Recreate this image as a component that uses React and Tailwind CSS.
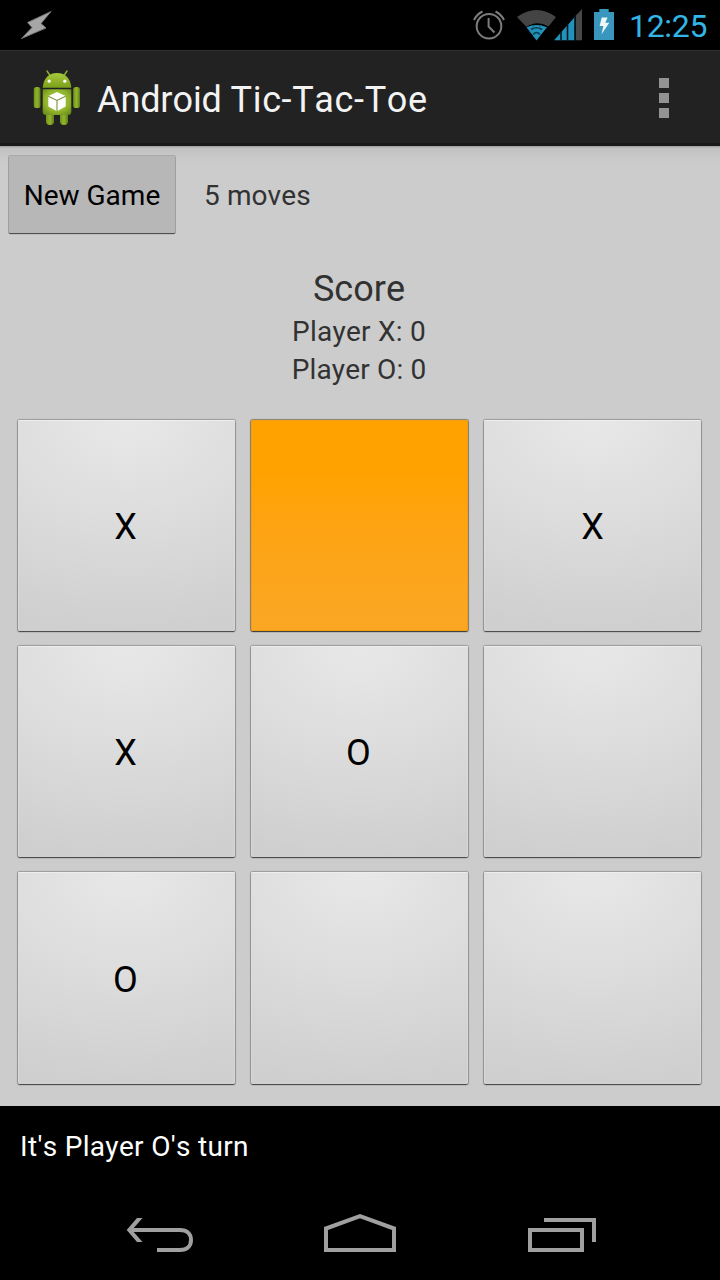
import React from "react";

function Bolt() {
  return (
    <svg className="block" width="60" height="50" viewBox="0 0 60 50">
      <path d="M51 11.5 L27.5 22.5 L32 27.5 L21.5 38.5 L46 28 L41 23.5 Z" fill="#a6a6a6" stroke="#777" strokeWidth="1" strokeLinejoin="round" />
    </svg>
  );
}

function StatusIcons() {
  return (
    <svg className="block" width="150" height="50" viewBox="470 0 150 50">
      <g fill="none" stroke="#7c7c7c" strokeWidth="2">
        <circle cx="489" cy="26.2" r="12.3" />
        <path d="M488.6 18 V26.5 L494.5 32.5" />
        <path d="M474 20 Q477 14 482.5 11.5 M504 20 Q501 14 495.5 11.5" />
      </g>
      <path d="M517 17 Q536.5 3 556 17 L548.5 26.5 Q536.5 20 526.5 27 Z" fill="#444" />
      <path d="M526.5 27.3 Q536.5 22.5 547 27.3 L536.5 40.5 Z" fill="#2491b8" />
      <path d="M531 29.5 Q536.5 26 542 29.5 M533 34.5 Q536.5 30.5 540 34.5" fill="none" stroke="#073f54" strokeWidth="1.7" />
      <path d="M532 24.8 L535 29 M541 24.8 L538 29" stroke="#176783" strokeWidth="1" />
      <path d="M554 40.3 L574.8 17 V40.3 Z" fill="#2491b8" />
      <path d="M575.8 15.5 L582 9 V40.3 H575.8 Z" fill="#484848" />
      <path d="M561 32 V40.3 M567.5 24 V40.3 M575 16 V40.3" stroke="#001824" strokeWidth="1.6" />
      <path d="M594 12 H599.3 V9 H608.7 V12 H614 V40 H594 Z" fill="#3997bd" />
      <path d="M601.7 17.5 H607.6 L605.3 22.7 H609.3 L601.5 34.2 L603.4 26 H599.6 Z" fill="#edf6f9" />
    </svg>
  );
}

function AndroidLogo() {
  return (
    <svg className="block" width="50" height="60" viewBox="32 68 50 60">
      <defs>
        <linearGradient id="droid" x1="0" x2="0" y1="0" y2="1">
          <stop offset="0" stopColor="#a6c93c" />
          <stop offset="1" stopColor="#7da01b" />
        </linearGradient>
        <linearGradient id="limb" x1="0" x2="1" y1="0" y2="0">
          <stop offset="0" stopColor="#71931b" />
          <stop offset=".5" stopColor="#91b52e" />
          <stop offset="1" stopColor="#5f8015" />
        </linearGradient>
        <radialGradient id="torso" cx=".5" cy=".45" r=".7">
          <stop offset="0" stopColor="#a8ca3d" />
          <stop offset=".6" stopColor="#91b52b" />
          <stop offset="1" stopColor="#65861a" />
        </radialGradient>
      </defs>
      <path d="M47 71 L50 75.5 M67 71 L64 75.5" stroke="#8cab2c" strokeWidth="1.5" strokeLinecap="round" />
      <path d="M42.7 87.8 C43.2 79 48.5 73 57 73 C65.5 73 70.8 79 71.3 87.8 Z" fill="url(#droid)" />
      <circle cx="49.2" cy="81.2" r="1.6" fill="#fff" />
      <circle cx="64.8" cy="81.2" r="1.6" fill="#fff" />
      <rect x="33.8" y="87" width="6.7" height="21" rx="2.6" fill="url(#limb)" />
      <rect x="73.2" y="87" width="6.7" height="21" rx="2.6" fill="url(#limb)" />
      <rect x="46" y="111" width="8" height="14" rx="3.7" fill="url(#limb)" />
      <rect x="60" y="111" width="8" height="14" rx="3.7" fill="url(#limb)" />
      <path d="M42.7 89.3 H71.3 V111.5 Q71.3 115 68 115 H46 Q42.7 115 42.7 111.5 Z" fill="url(#torso)" />
      <path d="M57 92 L65.7 96 V106.5 L57 111.2 L48.3 106.5 V96 Z" fill="#fff" />
      <path d="M48.3 96.3 L57 100.5 L65.7 96.3 M57 100.5 V111.2" fill="none" stroke="#789439" strokeWidth="1.1" />
    </svg>
  );
}

const cells = ["X", "", "X", "X", "O", "", "O", "", ""];

function Cell({ mark, highlighted }) {
  const surface = highlighted
    ? "bg-linear-to-b from-[#ffa200] from-25% to-[#fba724] shadow-[inset_0_0_0_1px_#f29e10,0_1px_1px_0_#3a3a3a,0_0_1px_1px_#8b8172]"
    : "bg-[radial-gradient(ellipse_130%_100%_at_50%_0%,#e8e8e8_0%,#dcdcdc_50%,#cfcfcf_100%)] shadow-[inset_0_1px_0_#eeeeee,inset_1px_0_0_#e0e0e088,inset_-1px_0_0_#e0e0e088,0_1px_1px_0_#444444,0_0_1px_1px_#999999]";
  return (
    <button className={`flex items-center justify-center rounded-[2px] pt-[2px] text-[36px] leading-none text-black nth-[3]:pl-[2px] nth-[7]:pt-[4px] ${surface}`}>
      <span className="-mr-[2px] pr-[4px]">{mark}</span>
    </button>
  );
}

export default function App() {
  return (
    <div className="flex h-[1280px] w-[720px] flex-col overflow-hidden bg-black font-['Roboto',sans-serif] [font-kerning:none]">
      <header className="flex h-[50px] shrink-0 items-center">
        <Bolt />
        <div className="ml-auto"><StatusIcons /></div>
        <time className="ml-[9px] w-[91px] pt-[2px] text-[32px] leading-[50px] tracking-[-0.3px] whitespace-nowrap text-[#33b5e5]">12:25</time>
      </header>
      <div className="flex h-24 shrink-0 items-center border-t border-b-[3px] border-t-[#303030] border-b-[#191919] bg-[#222] pt-[2px] pl-8">
        <AndroidLogo />
        <h1 className="ml-[15px] pt-[4px] text-[36px] leading-none tracking-[-0.1px] whitespace-nowrap text-[#f3f3f3]">
          Android <span className="tracking-[0.65px]">Tic-Tac-Toe</span>
        </h1>
        <button className="mr-[51px] ml-auto flex flex-col gap-[5px]">
          <span className="size-[10px] bg-[#939393]" />
          <span className="size-[10px] bg-[#939393]" />
          <span className="size-[10px] bg-[#939393]" />
        </button>
      </div>
      <main className="flex h-[960px] shrink-0 flex-col bg-[#ccc] bg-[linear-gradient(#999_0px,#c0c0c0_2px,#cacaca_12px,#ccc_24px)] text-[#323232]">
        <div className="flex h-[98px] items-start pt-[10px] pl-[9px]">
          <button className="h-[77px] w-[166px] rounded-[1px] bg-[#b7b7b7] pt-[2px] text-[28px] leading-none whitespace-nowrap text-black shadow-[0_1px_1px_0_#444444,0_0_0_1px_#aaaaaa]">New Game</button>
          <span className="ml-[29px] text-[28px] leading-[80px] tracking-[0.1px] whitespace-nowrap">5 moves</span>
        </div>
        <section className="flex h-[176px] flex-col items-center pt-[24px] pr-[2px]">
          <h2 className="text-[36px] leading-[42px] whitespace-nowrap">Score</h2>
          <p className="pt-[3px] text-[28px] leading-[38px] tracking-[0.25px] whitespace-nowrap">Player X: 0</p>
          <p className="text-[28px] leading-[38px] tracking-[0.15px] whitespace-nowrap">Player O: 0</p>
        </section>
        <section className="mr-[19px] ml-[18px] grid grid-cols-3 grid-rows-[211px_211px_212px] gap-x-[16px] gap-y-[15px]">
          {cells.map((mark, i) => <Cell key={i} mark={mark} highlighted={i === 1} />)}
        </section>
      </main>
      <p className="h-[78px] shrink-0 pl-5 text-[28px] leading-[82px] tracking-[0.32px] whitespace-nowrap text-white">It's Player O's turn</p>
      <nav className="flex h-24 shrink-0 items-center">
        <svg className="block" width="720" height="96" viewBox="0 1184 720 96">
          <g fill="none" stroke="#a0a0a0" strokeWidth="4">
            <path d="M130 1230 H180 C187 1230 191 1234 191 1240 C191 1246 187 1250 180 1250 H157" />
            <path d="M326 1250 V1228.5 L360 1216.2 L394 1228.5 V1250 Z" />
            <path d="M530 1230 H582 V1250 H530 Z M544 1220 H594 V1242" />
          </g>
          <path d="M137 1218 H142.5 L132 1230 L142.5 1242 H137 L126.7 1230 Z" fill="#a0a0a0" />
        </svg>
      </nav>
    </div>
  );
}
